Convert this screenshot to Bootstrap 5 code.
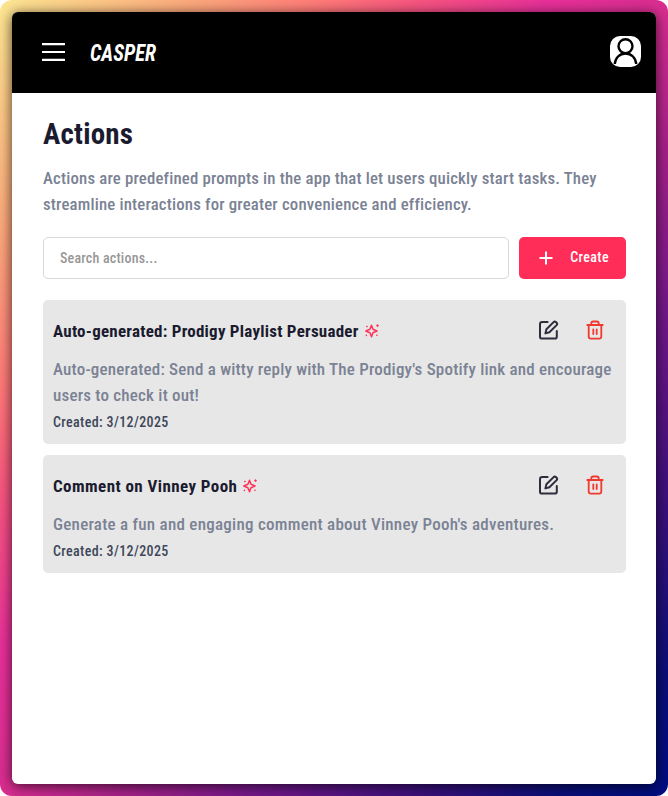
<!DOCTYPE html>
<html lang="en">
<head>
<meta charset="utf-8">
<meta name="viewport" content="width=device-width, initial-scale=1">
<title>Casper – Actions</title>
<link href="https://cdn.jsdelivr.net/npm/bootstrap@5.3.0/dist/css/bootstrap.min.css" rel="stylesheet">
<style>
  body { font-family: "Roboto Condensed", "Noto Sans", sans-serif; background: #fff; }
  .backdrop { height: 796px; padding: 12px; border-radius: 12px;
    background: linear-gradient(to bottom right, #fde792 0%, #fcab7c 14%, #ff7b78 24%, #f8567f 31%, #e8309a 41%, #d92d90 50%, #a62189 59%, #74188a 69%, #3c107c 81%, #0a0f78 92%, #000c80 100%); }
  .app-window { border-radius: 6px; box-shadow: 0 2px 13px rgba(0,0,0,.7); }
  .topbar { height: 81px; padding: 0 15px 2px 30px; }
  .brand { font: italic 700 23px/30px "Roboto Condensed", sans-serif; margin-left: 25px; padding-top: 4px; transform: scaleX(.89); transform-origin: 0 50%; }
  .avatar { width: 31px; height: 31px; border-radius: 10px; }
  .page { padding: 22px 30px 0 31px; }
  .page h1 { font-size: 29px; line-height: 38px; font-weight: 700; color: #1b1b30; margin: 0 0 12px; letter-spacing: .2px; }
  .copy { font-size: 16.8px; line-height: 26px; font-weight: 500; color: #7a8294; white-space: nowrap; margin: 0; letter-spacing: .18px; }
  .search-row { gap: 10px; margin-top: 20px; }
  .search { height: 42px; border: 1px solid #d8d8d8; border-radius: 5px; padding: 0 16px; font-size: 14px; font-weight: 500; letter-spacing: .2px; }
  .search::placeholder { color: #979797; opacity: 1; }
  .create { width: 107px; height: 42px; border-radius: 5px; background: #ff2d58; font-size: 14px; font-weight: 500; letter-spacing: .4px; padding: 0 16px 1px 19px; }
  .action-list { gap: 11px; margin-top: 20.5px; }
  .action-item { background: #e7e7e7; border-radius: 5px; padding: 18px 10px 12px; }
  .action-item .copy { font-size: 17px; letter-spacing: .2px; }
  .action-item h2 { font-size: 17px; line-height: 26px; font-weight: 700; color: #1b1b30; margin: 0 1px 0 0; white-space: nowrap; letter-spacing: .24px; }
  .action-item + .action-item h2 { letter-spacing: .43px; }
  .action-item + .action-item .copy { letter-spacing: .26px; }
  .created { font-size: 14px; line-height: 20px; font-weight: 500; color: #3c4658; margin-top: 4px; letter-spacing: .37px; }
  .tools { gap: 27px; padding: 0 12px 1px 0; }
  .plain-btn { padding: 0; border: 0; background: none; line-height: 0; }
</style>
</head>
<body>
<svg class="d-none">
  <symbol id="edit" viewBox="0 0 20 20"><g fill="none" stroke="#2d2d3d" stroke-width="2" stroke-linecap="round" stroke-linejoin="round"><path d="M8.600 2H3.2Q1 2 1 4.200V16.400Q1 18.600 3.200 18.600H15.600Q17.800 18.600 17.800 16.400V11"/><path d="M6.400 13.400 7.400 9.300 14.600 2.100Q15.700 1.100 17 2.100L17.600 2.700Q18.700 3.900 17.600 5.100L10.400 12.300Z"/></g></symbol>
  <symbol id="trash" viewBox="0 0 18 20"><g fill="none" stroke="#f0392f" stroke-width="1.800" stroke-linecap="round" stroke-linejoin="round"><path d="M1.300 5H16.700M5.300 4.700V3.300Q5.300 1.500 7.200 1.500H10.800Q12.700 1.500 12.700 3.300V4.700M2.700 5V16.600Q2.700 18.700 4.800 18.700H13.200Q15.300 18.700 15.300 16.600V5M7.300 9.300V14M10.700 9.300V14"/></g></symbol>
  <symbol id="spark" viewBox="0 0 16 16"><g fill="none" stroke="#ff3358" stroke-width="1.500" stroke-linejoin="round" stroke-linecap="round"><path d="M7.500 2.300 9 6.300 13 8 9 9.700 7.500 13.700 5.900 9.700 1.800 8 5.900 6.300Z"/><path d="M13.500 2V3.200M12.900 2.600H14.100M2.700 3.600H3.100M2.400 12.200V12.600M12.800 12.300H13"/></g></symbol>
</svg>
<div class="backdrop">
  <div class="app-window bg-white h-100 overflow-hidden">
    <nav class="topbar bg-black text-white d-flex align-items-center">
      <button class="plain-btn" aria-label="Menu"><svg width="23" height="20" viewBox="0 0 23 20"><path d="M0 2.200H23M0 10H23M0 17.800H23" stroke="#fff" stroke-width="2.200"/></svg></button>
      <span class="brand">CASPER</span>
      <span class="avatar bg-white ms-auto overflow-hidden"><svg class="d-block" width="31" height="31" viewBox="0 0 31 31" fill="none" stroke="#000" stroke-width="2.400"><circle cx="15.500" cy="10.200" r="7"/><path d="M4.800 28C5.200 22 9.500 17.500 15.500 17.500S25.800 22 26.200 28"/></svg></span>
    </nav>
    <main class="page">
      <h1>Actions</h1>
      <p class="copy">Actions are predefined prompts in the app that let users quickly start tasks. They<br>streamline interactions for greater convenience and efficiency.</p>
      <div class="search-row d-flex">
        <input class="search form-control flex-fill" placeholder="Search actions..." aria-label="Search actions">
        <button class="create btn text-white d-flex align-items-center justify-content-between flex-shrink-0"><svg width="14" height="14" viewBox="0 0 14 14"><path d="M7 .5V13.500M.5 7H13.500" stroke="#fff" stroke-width="2"/></svg><span>Create</span></button>
      </div>
      <div class="action-list d-grid">
        <article class="action-item">
          <div class="d-flex align-items-center"><h2>Auto-generated: Prodigy Playlist Persuader</h2><svg class="ms-1" width="16" height="16"><use href="#spark"/></svg>
            <div class="tools d-flex ms-auto"><button class="plain-btn" aria-label="Edit"><svg width="20" height="20"><use href="#edit"/></svg></button><button class="plain-btn" aria-label="Delete"><svg width="18" height="20"><use href="#trash"/></svg></button></div></div>
          <p class="copy mt-2 pt-1">Auto-generated: Send a witty reply with The Prodigy's Spotify link and encourage<br>users to check it out!</p>
          <div class="created">Created: 3/12/2025</div>
        </article>
        <article class="action-item">
          <div class="d-flex align-items-center"><h2>Comment on Vinney Pooh</h2><svg class="ms-1" width="16" height="16"><use href="#spark"/></svg>
            <div class="tools d-flex ms-auto"><button class="plain-btn" aria-label="Edit"><svg width="20" height="20"><use href="#edit"/></svg></button><button class="plain-btn" aria-label="Delete"><svg width="18" height="20"><use href="#trash"/></svg></button></div></div>
          <p class="copy mt-2 pt-1">Generate a fun and engaging comment about Vinney Pooh's adventures.</p>
          <div class="created">Created: 3/12/2025</div>
        </article>
      </div>
    </main>
  </div>
</div>
<script src="https://cdn.jsdelivr.net/npm/bootstrap@5.3.0/dist/js/bootstrap.bundle.min.js"></script>
</body>
</html>
